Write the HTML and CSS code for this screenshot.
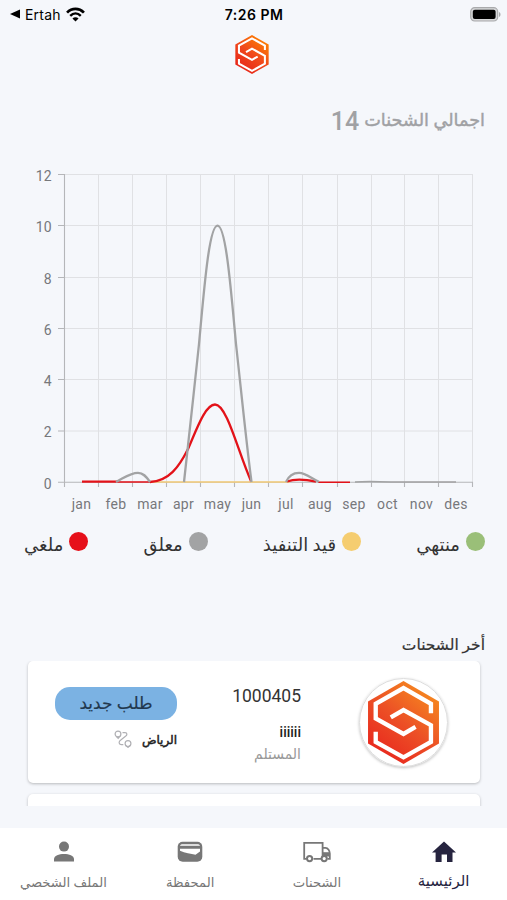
FILE: index.html
```html
<!DOCTYPE html>
<html lang="ar" dir="rtl">
<head>
    <meta charset="UTF-8">
    <meta name="viewport" content="width=device-width, initial-scale=1.0">
    <title>الرئيسية</title>
    <link rel="stylesheet" href="styles.css">
</head>
<body>
    <svg class="defs" width="0" height="0">
        <defs>
            <linearGradient id="logo-fill" x1="0.15" y1="1" x2="0.85" y2="0">
                <stop offset="0" stop-color="#e8211c"/>
                <stop offset="0.5" stop-color="#ec5026"/>
                <stop offset="1" stop-color="#f7901e"/>
            </linearGradient>
            <linearGradient id="logo-fill-bright" x1="0.15" y1="1" x2="0.85" y2="0">
                <stop offset="0" stop-color="#e5201a"/>
                <stop offset="0.5" stop-color="#f0481b"/>
                <stop offset="1" stop-color="#ff8a00"/>
            </linearGradient>
        </defs>
        <symbol id="logo-lines" viewBox="0 0 212 248">
            <path d="M188 96V68L106 21L23 68V112L106 158L142 137"/>
            <path d="M68 109L106 87L188 132V182L106 228L23 182V152"/>
        </symbol>
    </svg>

    <div class="status-bar" dir="ltr">
        <div class="status-left">
            <svg width="10" height="10" viewBox="0 0 10 10"><path d="M0 5L10 0.5V9.5Z"/></svg>
            <span>Ertah</span>
            <svg class="wifi" width="19" height="15" viewBox="0 0 18 14">
                <path d="M1 5.2C5.6 0.6 12.4 0.6 17 5.2" fill="none" stroke="#000" stroke-width="2.6"/>
                <path d="M4 8.3C7 5.4 11 5.4 14 8.3" fill="none" stroke="#000" stroke-width="2.3"/>
                <path d="M9 13.6L6.1 10.7C7.8 9.2 10.2 9.2 11.9 10.7Z"/>
            </svg>
        </div>
        <div class="status-time">7:26 PM</div>
        <div class="status-right">
            <svg width="32" height="15" viewBox="0 0 32 15">
                <rect x="0.7" y="0.7" width="27" height="13.3" rx="4" fill="#d6d7d9" stroke="#a9aaac" stroke-width="1.2"/>
                <rect x="2.8" y="2.8" width="22.8" height="9.2" rx="2"/>
                <path d="M29 5V10C31 9.2 31 5.8 29 5Z" fill="#a9aaac"/>
            </svg>
        </div>
    </div>

    <header>
        <svg class="header-logo" viewBox="0 0 212 248">
            <path d="M106 0L212 61V187L106 248L0 187V61Z" fill="url(#logo-fill-bright)"/>
            <use href="#logo-lines"/>
        </svg>
    </header>

    <main>
        <h1 class="total"><span>اجمالي الشحنات</span> <b>14</b></h1>

        <svg class="chart" width="507" height="360" viewBox="0 160 507 360" direction="ltr">
            <g class="grid">
                <path d="M64 174.5H473M64 225.5H473M64 277.5H473M64 328.5H473M64 379.5H473M64 431H473"/>
                <path d="M98.5 174V482M132.5 174V482M166.5 174V482M200.5 174V482M234.5 174V482M268.5 174V482M302.5 174V482M337.5 174V482M371.5 174V482M404.5 174V482M438.5 174V482M472.5 174V482"/>
            </g>
            <g class="axis">
                <path d="M64.5 174V487M58 482.3H473"/>
                <path d="M58 174.5H64M58 225.5H64M58 277.5H64M58 328.5H64M58 379.5H64M58 431H64"/>
                <path d="M98.5 482V487M132.5 482V487M166.5 482V487M200.5 482V487M234.5 482V487M268.5 482V487M302.5 482V487M337.5 482V487M371.5 482V487M404.5 482V487M438.5 482V487M472.5 482V487"/>
            </g>
            <g class="series">
                <path class="progress" d="M150 482H290"/>
                <path class="canceled" d="M82 481.7H118"/>
                <path class="canceled thin" d="M118 482H150M318 482.2H350"/>
                <path class="canceled" d="M150 482C169 481 179 467 188 449C196 431 205 404.5 215 404.5C227 404.5 238 452 251 481"/>
                <path class="canceled" d="M287 481.5C294 479 303 479 316 481.5"/>
                <path class="pending" d="M116 482C124 478 130 472.8 138 472.8C143 472.8 146 476 150 482"/>
                <path class="pending" d="M184 482C189 440 194 389 199 344C204 290 209 225.7 217.5 225.7C226 225.7 231 290 236 344C241 389 246 440 251.5 482"/>
                <path class="pending" d="M286 482C289 475 294 472.8 299 472.8C306 472.8 312 479 319 481.7"/>
                <path class="pending thin" d="M355 482C367 481 379 481.5 391 482H456"/>
            </g>
            <g class="y-labels">
                <text x="52" y="180.5">12</text>
                <text x="52" y="231.5">10</text>
                <text x="52" y="283.5">8</text>
                <text x="52" y="334.5">6</text>
                <text x="52" y="385.5">4</text>
                <text x="52" y="437">2</text>
                <text x="52" y="488.5">0</text>
            </g>
            <g class="x-labels">
                <text x="81.5" y="509">jan</text>
                <text x="116" y="509">feb</text>
                <text x="150" y="509">mar</text>
                <text x="183.5" y="509">apr</text>
                <text x="217.5" y="509">may</text>
                <text x="251.5" y="509">jun</text>
                <text x="286" y="509">jul</text>
                <text x="320" y="509">aug</text>
                <text x="354" y="509">sep</text>
                <text x="387.5" y="509">oct</text>
                <text x="421.5" y="509">nov</text>
                <text x="456" y="509">des</text>
            </g>
        </svg>

        <div class="legend">
            <div class="legend-item"><i class="dot done"></i><span>منتهي</span></div>
            <div class="legend-item"><i class="dot running"></i><span>قيد التنفيذ</span></div>
            <div class="legend-item"><i class="dot waiting"></i><span>معلق</span></div>
            <div class="legend-item"><i class="dot stopped"></i><span>ملغي</span></div>
        </div>

        <h2 class="latest">أخر الشحنات</h2>

        <div class="shipment-list">
            <div class="shipment-card">
                <div class="avatar">
                    <svg viewBox="0 0 212 248">
                        <path d="M106 0L212 61V187L106 248L0 187V61Z" fill="url(#logo-fill)"/>
                        <use href="#logo-lines"/>
                    </svg>
                </div>
                <div class="shipment-info">
                    <div class="number">1000405</div>
                    <div class="name">iiiiii</div>
                    <div class="role">المستلم</div>
                </div>
                <div class="shipment-state">
                    <div class="badge">طلب جديد</div>
                    <div class="city">
                        <span>الرياض</span>
                        <svg width="18" height="18" viewBox="0 0 18 18">
                            <circle cx="4" cy="4" r="2.9"/>
                            <circle cx="14" cy="13.6" r="2.9"/>
                            <path d="M6 6.2L4.2 8.4L2.2 6.3M8.5 2.6H11C13.5 2.6 13.3 5.2 11.5 6.2L6.5 10.3C4.3 12 5 14.6 7.4 14.6H9.3M12 15.6L14 17.4L16 15.5"/>
                        </svg>
                    </div>
                </div>
            </div>
            <div class="shipment-card"></div>
        </div>
    </main>

    <nav>
        <a class="nav-item active">
            <svg width="26" height="24" viewBox="0 0 26 24"><path d="M13 1.5L25 12.5H21.5V22H16V14.5H10.6V22H4.6V12.5H1Z"/></svg>
            <span>الرئيسية</span>
        </a>
        <a class="nav-item shipments">
            <svg width="28" height="24" viewBox="0 0 28 24">
                <path d="M3.5 18.8H1.2V2.9H19.6V18.8H10.5" fill="none" stroke="#777" stroke-width="1.8"/>
                <path d="M20 7.8H22.5C25 7.8 26.8 11 26.8 13.5V18.8H24.5" fill="none" stroke="#777" stroke-width="1.8"/>
                <path d="M20 12.2H26.8V16.5H20Z"/>
                <circle cx="6.6" cy="18.6" r="2.6" fill="#fff" stroke="#777" stroke-width="2"/>
                <circle cx="21.2" cy="18.6" r="2.6" fill="#fff" stroke="#777" stroke-width="2"/>
            </svg>
            <span>الشحنات</span>
        </a>
        <a class="nav-item wallet">
            <svg width="26" height="24" viewBox="0 0 26 24">
                <rect x="0.7" y="1.8" width="24.6" height="20" rx="5"/>
                <path d="M3 5.8C3.3 4.6 4.5 4.2 6 4.2H20C21.5 4.2 22.7 4.6 23 5.8Z" fill="#fff"/>
                <path d="M3 8.8H23V11.5L18.5 14.8C14 14 8 13 3 10.8Z" fill="#fff"/>
            </svg>
            <span>المحفظة</span>
        </a>
        <a class="nav-item profile">
            <svg width="22" height="24" viewBox="0 0 22 24">
                <circle cx="12" cy="6.6" r="5"/>
                <path d="M2 21.5V19C2 12.2 22 12.2 22 19V21.5Z"/>
            </svg>
            <span>الملف الشخصي</span>
        </a>
    </nav>
</body>
</html>
```
FILE: styles.css
```css
* {
    box-sizing: border-box;
}
body {
    margin: 0;
    width: 507px;
    height: 900px;
    overflow: hidden;
    display: flex;
    flex-direction: column;
    background-color: #f5f7fb;
    color: #333;
    font-family: Roboto, "DejaVu Sans", sans-serif;
}
svg {
    display: block;
}
.defs {
    position: absolute;
}
#logo-lines path {
    fill: none;
    stroke: #fff;
    stroke-width: 13;
}

/* status bar */
.status-bar {
    height: 28px;
    flex: none;
    display: grid;
    grid-template-columns: 1fr auto 1fr;
    align-items: center;
    padding: 0 5px 0 10px;
    font-family: Inter, sans-serif;
    font-size: 14px;
    color: #000;
}
.status-left {
    display: flex;
    align-items: center;
    gap: 5px;
    letter-spacing: 0.2px;
}
.status-time {
    font-weight: 600;
    letter-spacing: 0.5px;
    margin-right: 4px;
}
.status-right {
    display: flex;
    justify-content: flex-end;
}

header {
    height: 54px;
    flex: none;
    display: flex;
    justify-content: center;
    padding-top: 7px;
    padding-right: 3px;
}
.header-logo {
    width: 34px;
    height: 39px;
}

main {
    flex: 1;
    min-height: 0;
}
.total {
    margin: 0 22px 0 0;
    height: 78px;
    padding-top: 22px;
    display: flex;
    align-items: flex-start;
    gap: 5px;
    color: #a0a1a4;
    font-size: 17.7px;
    font-weight: normal;
    line-height: 33px;
}
.total span {
    -webkit-text-stroke: 0.4px #a0a1a4;
}
.total b {
    font-size: 25px;
    font-weight: 500;
    line-height: 36px;
}

/* chart */
.grid path {
    fill: none;
    stroke: #e0e1e4;
    stroke-width: 1;
}
.axis path {
    fill: none;
    stroke: #b5b6b9;
    stroke-width: 1.1;
}
.series path {
    fill: none;
    stroke-width: 2.3;
}
.series .progress {
    stroke: #f5cd78;
    stroke-width: 1.5;
}
.series .canceled {
    stroke: #e31219;
}
.series .pending {
    stroke: #a2a3a4;
}
.series .thin {
    stroke-width: 1.4;
}
.y-labels text,
.x-labels text {
    fill: #77787b;
    font-size: 14px;
    letter-spacing: 0.3px;
}
.y-labels text {
    text-anchor: end;
}
.x-labels text {
    text-anchor: middle;
}

/* legend */
.legend {
    display: flex;
    justify-content: space-between;
    height: 110px;
    padding: 12px 22px 0 24px;
}
.legend-item {
    display: flex;
    align-items: flex-start;
    gap: 6px;
    font-size: 18px;
    line-height: 26px;
}
.dot {
    width: 19px;
    height: 19px;
    border-radius: 50%;
}
.done {
    background-color: #9abf78;
}
.running {
    background-color: #f5cd70;
}
.waiting {
    background-color: #a2a3a4;
}
.stopped {
    background-color: #e6101a;
}

.latest {
    margin: 0 22px 0 0;
    height: 31px;
    font-size: 15.5px;
    font-weight: normal;
    line-height: 30px;
    -webkit-text-stroke: 0.2px #333;
}

/* shipments */
.shipment-list {
    height: 145px;
    padding: 0 27px 0 28px;
    overflow: hidden;
}
.shipment-card {
    height: 122px;
    margin-bottom: 11px;
    padding: 0 32px 0 27px;
    display: flex;
    background-color: #fff;
    border-radius: 5px;
    box-shadow: 0 1px 3px rgba(0,0,0,0.25);
}
.avatar {
    width: 89px;
    height: 89px;
    margin-top: 17px;
    display: flex;
    align-items: center;
    justify-content: center;
    border: 1px solid #ddd;
    border-radius: 50%;
    box-shadow: 0 1px 3px rgba(0,0,0,0.25);
}
.avatar svg {
    width: 71px;
    height: 83px;
}
.shipment-info {
    flex: 1;
    margin-right: 58px;
    padding-top: 22px;
}
.number {
    font-size: 17.5px;
    line-height: 26px;
}
.name {
    margin-top: 12px;
    font-size: 14px;
    font-weight: 500;
    line-height: 22px;
    color: #222;
}
.role {
    font-size: 14px;
    line-height: 22px;
    color: #999;
}
.shipment-state {
    width: 122px;
    padding-top: 26px;
}
.badge {
    height: 33px;
    border-radius: 15px;
    background-color: #7bb2e3;
    color: #22384e;
    font-size: 17px;
    line-height: 32px;
    text-align: center;
    -webkit-text-stroke: 0.2px #22384e;
}
.city {
    display: flex;
    align-items: center;
    gap: 10px;
    margin-top: 9px;
    font-size: 12px;
    line-height: 22px;
    color: #222;
    -webkit-text-stroke: 0.5px #222;
}
.city svg {
    margin-bottom: 3px;
    fill: none;
    stroke: #b0b0b4;
    stroke-width: 1.2;
}

/* bottom navigation */
nav {
    height: 72px;
    flex: none;
    display: grid;
    grid-template-columns: repeat(4, 1fr);
    background-color: #fff;
}
.nav-item {
    display: flex;
    flex-direction: column;
    align-items: center;
    padding-top: 12px;
    color: #777;
    fill: #777;
    font-size: 13.2px;
    line-height: 38px;
    white-space: nowrap;
}
.nav-item.active {
    color: #26243f;
    fill: #26243f;
    font-size: 15px;
    line-height: 35px;
}
```
